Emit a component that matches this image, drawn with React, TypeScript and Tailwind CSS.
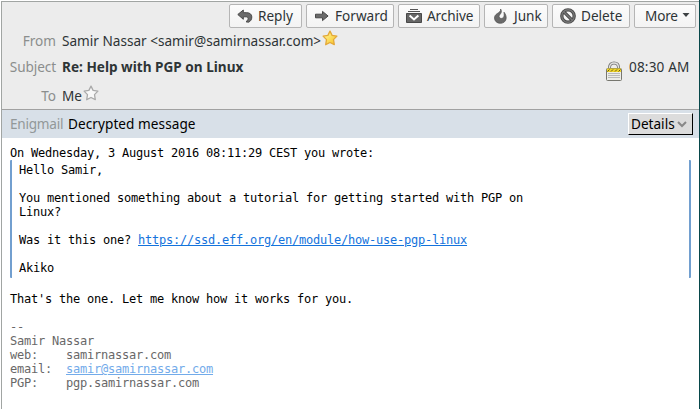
import type { ReactNode } from "react";

function ToolButton({ className, children }: { className: string; children: ReactNode }) {
  return (
    <button
      className={`flex h-6 shrink-0 items-center rounded-[2px] border border-[#b5b5b5] bg-linear-to-b from-[#fcfcfc] to-[#f3f3f3] whitespace-nowrap text-[#2e3436] ${className}`}
    >
      {children}
    </button>
  );
}

function ReplyIcon() {
  return (
    <svg width="16" height="14" viewBox="0 0 16 14" className="shrink-0">
      <path d="M.8 5.500 6.300 1v2.700h3.500c3 0 5 1.700 5 4.200 0 2.700-1.300 4.500-3.300 5.300L9 12.800c1.600-1.300 2.200-2.300 2.100-3.300-.1-1-.8-1.700-2.100-1.700H6.300v2.500Z" fill="#6a6a6a" stroke="#484848" strokeWidth="1" strokeLinejoin="round" />
    </svg>
  );
}

function ForwardIcon() {
  return (
    <svg width="14" height="13" viewBox="0 0 14 13" className="shrink-0">
      <path d="M.5 4.200h7V1.400l5.600 4.600-5.600 4.600V7.800h-7Z" fill="#6a6a6a" stroke="#484848" />
    </svg>
  );
}

function ArchiveIcon() {
  return (
    <svg width="16" height="16" viewBox="0 0 16 16" className="shrink-0">
      <path d="M4 1.500h8M2 3.500h12" stroke="#555" />
      <path d="M.5 5.500h15v9H.5Z" fill="#666" stroke="#484848" />
      <path d="m3.600 7.500 4.400 4 4.400-4" fill="none" stroke="#fff" strokeWidth="2" />
    </svg>
  );
}

function JunkIcon() {
  return (
    <svg width="13" height="16" viewBox="0 0 13 16" className="shrink-0">
      <path d="M6.600 1C6.900 3.200 5.500 4.200 3.300 5.500 1.300 6.800.5 8.200.5 10c0 3 2.400 5.300 5.800 5.300s5.900-2.200 5.900-5.500c0-1.900-.7-3.800-2.200-5.600.3 2.500.3 4.400-.8 5.500-.9.900-2.600 1-3.500.1-1-1-.8-2.200.3-3.400C7.500 4.900 7.900 2.900 6.600 1Z" fill="#6a6a6a" stroke="#505050" strokeWidth=".7" />
    </svg>
  );
}

function DeleteIcon() {
  return (
    <svg width="16" height="16" viewBox="0 0 16 16" className="shrink-0">
      <circle cx="8" cy="8" r="6.200" fill="none" stroke="#484848" strokeWidth="3.300" />
      <path d="m3.700 3.700 8.600 8.600" stroke="#484848" strokeWidth="3.300" />
      <circle cx="8" cy="8" r="6.200" fill="none" stroke="#777" strokeWidth="1.400" />
      <path d="m3.700 3.700 8.600 8.600" stroke="#777" strokeWidth="1.300" />
    </svg>
  );
}

function Star({ filled = false }: { filled?: boolean }) {
  return (
    <svg width="16" height="16" viewBox="0 0 16 16" className="-mt-0.5 shrink-0">
      <defs>
        <linearGradient id="gold" x1="0" y1="0" x2="1" y2="1">
          <stop offset=".2" stopColor="#fff28a" />
          <stop offset="1" stopColor="#f7bd1c" />
        </linearGradient>
      </defs>
      <path
        d="m8 1.100 2.100 4.300 4.800.7-3.400 3.500.8 5.100L8 12.500l-4.300 2.200.8-5.100L1.100 6.100l4.800-.7Z"
        fill={filled ? "url(#gold)" : "#f8f8f8"}
        stroke={filled ? "#e3a83a" : "#aaa"}
        strokeWidth="1.300"
        strokeLinejoin="round"
      />
    </svg>
  );
}

function LockIcon() {
  return (
    <svg width="18" height="21" viewBox="0 0 18 21" className="mt-[3px] shrink-0">
      <path d="M4.500 9V6.500C4.500 3.600 6.300 2 9 2s4.500 1.600 4.500 4.500V9" fill="none" stroke="#777" strokeWidth="3" />
      <path d="M4.500 9V6.500C4.500 3.600 6.300 2 9 2s4.500 1.600 4.500 4.500V9" fill="none" stroke="#e2e2e2" strokeWidth="1.300" />
      <rect x="1.500" y="7.500" width="15" height="12" rx="1" fill="#ecece8" stroke="#77776f" />
      <path d="M2 7.500h14v3.500H2Z" fill="#f0d426" />
      <path d="m2.500 10.500 2-2m1.500 2 2-2m2 2 2-2m1.500 2 2-2" stroke="#62571c" />
      <path d="M3 12.500h12M3 14.500h12M3 16.500h12" stroke="#b9b9b9" />
    </svg>
  );
}

export default function App() {
  return (
    <div className="flex h-[409px] w-[700px] overflow-hidden border-r border-[#07474a] bg-white pt-px pl-px font-['Noto_Sans',sans-serif] text-[13.600px] leading-[18px]">
      <div className="flex min-w-0 flex-1 flex-col border-t border-l border-[#a1a5a3]">
        <header className="flex h-[108px] shrink-0 flex-col border-b border-[#a1a1a1] bg-[#ececec] text-[#2e3436]">
          <div className="flex h-[30px] justify-end gap-1 pt-[2px] pr-[3px]">
            <ToolButton className="w-[73px] gap-[5px] pl-[7px]"><ReplyIcon /><span>Reply</span></ToolButton>
            <ToolButton className="w-[88px] gap-[6px] pl-[8px]"><ForwardIcon /><span>Forward</span></ToolButton>
            <ToolButton className="w-[82px] gap-[5px] pl-[7px] tracking-[-0.100px]"><ArchiveIcon /><span>Archive</span></ToolButton>
            <ToolButton className="w-[64px] gap-[7px] pl-[9px]"><JunkIcon /><span>Junk</span></ToolButton>
            <ToolButton className="w-[78px] gap-[5px] pl-[7px]"><DeleteIcon /><span>Delete</span></ToolButton>
            <ToolButton className="w-[62px] gap-[4px] pl-[10px] tracking-[-0.200px]">
              <span>More</span>
              <svg width="8" height="5" viewBox="0 0 8 5" className="-mt-0.5"><path d="M.500 0h7L4 4Z" fill="#3c4143" /></svg>
            </ToolButton>
          </div>
          <div className="flex h-[22px] gap-[6px]">
            <span className="w-[54px] text-right text-[#8b8e8d]">From</span>
            <span className="flex"><span className="w-[260px] whitespace-nowrap">Samir Nassar &lt;samir@samirnassar.com&gt;</span><Star filled /></span>
          </div>
          <div className="flex h-[30px] gap-[6px] pt-[4px]">
            <span className="w-[54px] text-right tracking-[-0.100px] text-[#8b8e8d]">Subject</span>
            <span className="flex-1 font-bold">Re: Help with PGP on Linux</span>
            <LockIcon />
            <span className="mr-[9px] w-[61px] tracking-[0.150px] whitespace-nowrap">08:30 AM</span>
          </div>
          <div className="flex gap-[6px] pt-[3px]">
            <span className="w-[54px] text-right text-[#8b8e8d]">To</span>
            <span className="flex"><span className="w-[21px]">Me</span><Star /></span>
          </div>
        </header>
        <div className="flex h-7 shrink-0 items-center bg-[#d8e0e8] pr-[6px] pl-[8px] text-black">
          <span className="w-[58px] tracking-[-0.250px] text-[#929899]">Enigmail</span>
          <span className="flex-1 tracking-[0.060px]">Decrypted message</span>
          <button className="flex h-[22px] w-[65px] items-center gap-[2px] border border-t-white border-r-black border-b-black border-l-white bg-[#dcdcdc] pl-[2px]">
            <span>Details</span>
            <svg width="10" height="7" viewBox="0 0 10 7"><path d="m1 1 4 4 4-4" fill="none" stroke="#888" strokeWidth="2" /></svg>
          </button>
        </div>
        <main className="flex-1 bg-white pt-[8px] pr-[8px] pl-[8px] font-['DejaVu_Sans_Mono',monospace] text-[12px] leading-[14px] tracking-[-0.224px] text-black">
          <p>On Wednesday, 3 August 2016 08:11:29 CEST you wrote:</p>
          <blockquote className="h-[118px] rounded-[1px] border-x-2 border-[#729fcf] pt-[3px] pl-[7px] whitespace-pre">
            <p>Hello Samir,</p>
            <p className="mt-[14px]">You mentioned something about a tutorial for getting started with PGP on</p>
            <p>Linux?</p>
            <p className="mt-[14px]">Was it this one? <a className="text-[#1473dc] underline">https://ssd.eff.org/en/module/how-use-pgp-linux</a></p>
            <p className="mt-[14px]">Akiko</p>
          </blockquote>
          <p className="mt-[14px]">That's the one. Let me know how it works for you.</p>
          <div className="mt-[14px] whitespace-pre text-[#686868]">
            <p>-- </p>
            <p>Samir Nassar</p>
            <p>web:    samirnassar.com</p>
            <p>email:  <a className="text-[#72abea] underline">samir@samirnassar.com</a></p>
            <p>PGP:    pgp.samirnassar.com</p>
          </div>
        </main>
      </div>
    </div>
  );
}
